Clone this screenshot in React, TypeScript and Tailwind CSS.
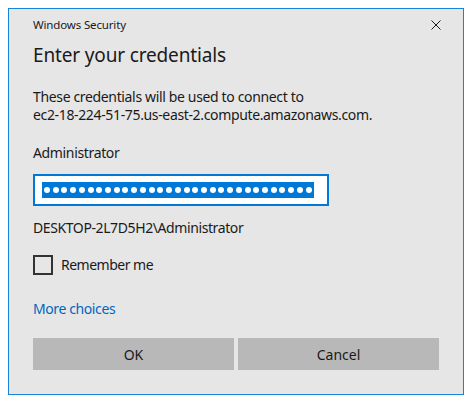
import React from "react"

const font = { fontFamily: '"Noto Sans", "Open Sans", sans-serif' }

function CloseIcon() {
  return (
    <svg width="10" height="10" viewBox="0 0 10 10" className="block">
      <path d="M0.5 0.5 L9.5 9.5 M9.5 0.5 L0.5 9.5" stroke="#1a1a1a" strokeWidth="1" />
    </svg>
  )
}

export default function App() {
  return (
    <div className="h-[402px] w-[471px] bg-white pl-2 pt-2" style={font}>
      <div className="flex h-[387px] w-[456px] flex-col border border-[#1883d7] bg-[#e6e6e6] px-6 text-[#1a1a1a]">
        <div className="flex h-[31px] items-center justify-between">
          <span className="text-[11.5px] tracking-[-0.15px]">Windows Security</span>
          <span className="-mr-[2px]">
            <CloseIcon />
          </span>
        </div>
        <h1 className="mt-[1px] text-[19px] leading-[28px] tracking-[-0.15px]">Enter your credentials</h1>

        <p className="mt-[19px] text-[14px] leading-[18px] tracking-[-0.35px]">
          These credentials will be used to connect to
          <br />
          ec2-18-224-51-75.us-east-2.compute.amazonaws.com.
        </p>

        <label className="mt-[19px] text-[14px] leading-[20px] tracking-[-0.35px]">Administrator</label>

        <div className="mt-[11px] flex h-[32px] w-[296px] items-center border-2 border-[#0078d7] bg-white pl-[7px]">
          <span className="flex h-[16px] w-[272px] items-center justify-between bg-[#0078d7] px-[2px]">
            {Array.from({ length: 31 }).map((_, i) => (
              <span key={i} className="h-[6px] w-[6px] rounded-full bg-white" />
            ))}
          </span>
        </div>

        <div className="mt-[12px] text-[14px] leading-[20px] tracking-[-0.4px]">DESKTOP-2L7D5H2\Administrator</div>

        <div className="mt-[17px] flex items-center gap-[8px]">
          <span className="h-[20px] w-[20px] border-2 border-[#333333]" />
          <span className="text-[14px] leading-[20px] tracking-[-0.5px]">Remember me</span>
        </div>

        <div className="mt-[24px] text-[14px] leading-[20px] tracking-[-0.4px] text-[#0067c0]">More choices</div>

        <div className="mt-[19px] flex gap-[4px]">
          <button className="h-[32px] w-[201px] bg-[#b8b8b8] text-[14px]">OK</button>
          <button className="h-[32px] w-[201px] bg-[#b8b8b8] text-[14px]">Cancel</button>
        </div>
      </div>
    </div>
  )
}
